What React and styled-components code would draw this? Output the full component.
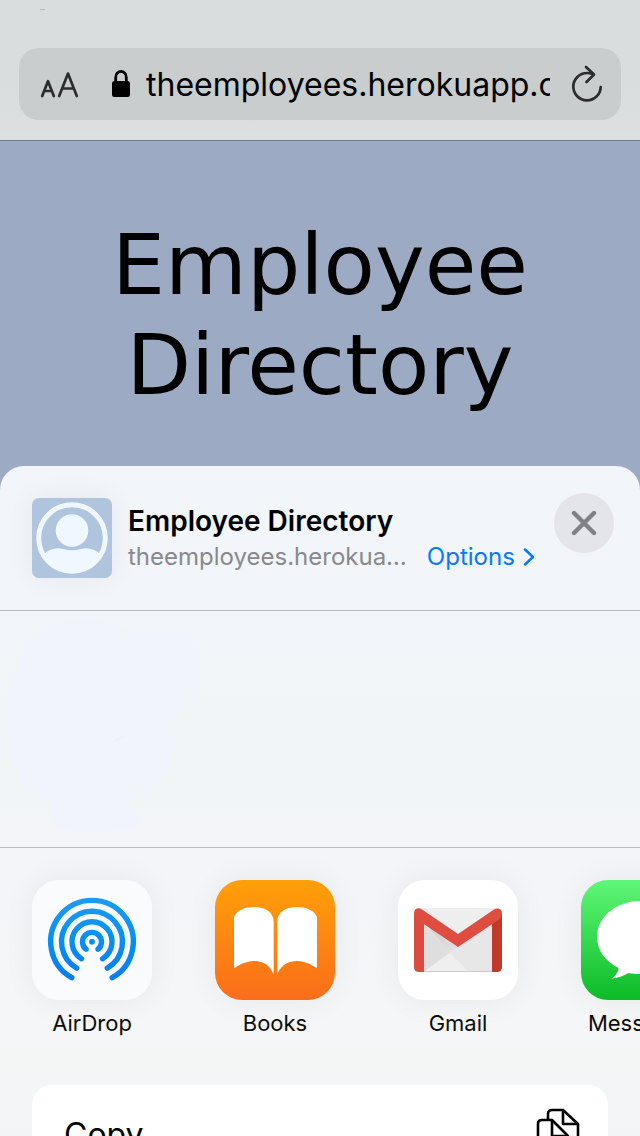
import React from 'react';
import styled, { createGlobalStyle } from 'styled-components';

const GlobalStyle = createGlobalStyle`
  * { box-sizing: border-box; }
  body {
    margin: 0;
    font-family: Inter, "Liberation Sans", sans-serif;
    color: #000;
  }
  button { font: inherit; color: inherit; border: 0; padding: 0; background: none; cursor: pointer; }
  svg { display: block; }
`;

const Screen = styled.div`
  display: flex;
  flex-direction: column;
  height: 100vh;
  overflow: hidden;
  background: #9cabc3;
`;

const BrowserChrome = styled.header`
  flex: none;
  padding: 0 19px 20px;
  border-bottom: 1px solid #727e90;
  background: linear-gradient(#dadddd, #d9dddd 60%, #dddfe0);
`;

const StatusBar = styled.div`
  display: flex;
  height: 48px;
  padding: 9px 21px;
`;

const StatusMark = styled.span`
  width: 5px;
  height: 1px;
  background: #b9bcbc;
`;

const AddressBar = styled.div`
  display: flex;
  align-items: center;
  height: 72px;
  padding: 0 18px 0 20px;
  border-radius: 20px;
  background: #c9cdce;
`;

const BarButton = styled.button`
  flex: none;
  color: #2b2d2d;
`;

const LockIcon = styled.svg`
  flex: none;
  margin-left: 33px;
`;

const UrlInput = styled.input`
  flex: 1;
  min-width: 0;
  height: 48px;
  margin: 0 21px 0 16px;
  padding: 0;
  border: 0;
  outline: 0;
  background: none;
  color: #000;
  font-family: inherit;
  font-size: 32px;
`;

const Hero = styled.main`
  flex: none;
  padding: 74px 64px 51px;
`;

const HeroTitle = styled.h1`
  margin: 0;
  font-family: "DejaVu Sans", sans-serif;
  font-size: 84px;
  font-weight: 400;
  line-height: 100px;
  text-align: center;
`;

const Sheet = styled.section`
  flex: 1;
  min-height: 0;
  overflow: hidden;
  border-radius: 24px 24px 0 0;
  background: linear-gradient(#f2f5f9, #f1f5f8 45%, #f4f5f8 60%, #f4f6f6 90%, #f3f4f6);
`;

const SheetHeader = styled.div`
  display: flex;
  height: 145px;
  padding: 32px 26px 32px 32px;
  border-bottom: 1px solid #b9bcc2;
`;

const Thumb = styled.svg`
  flex: none;
  border-radius: 7px;
  box-shadow: 0 0 28px rgba(0, 0, 0, 0.06);
`;

const PageInfo = styled.div`
  flex: 1;
  min-width: 0;
  padding: 5px 0 0 16px;
`;

const PageTitle = styled.h2`
  margin: 0;
  font-size: 28px;
  font-weight: 600;
  line-height: 36px;
  white-space: nowrap;
`;

const PageMeta = styled.div`
  display: flex;
  align-items: center;
  gap: 20px;
  font-size: 24px;
  line-height: 36px;
  white-space: nowrap;
`;

const PageUrl = styled.span`
  color: #88898d;
`;

const OptionsButton = styled.button`
  display: flex;
  align-items: center;
  gap: 8px;
  color: #007aff;
`;

const CloseButton = styled.button`
  display: grid;
  flex: none;
  place-items: center;
  width: 60px;
  height: 60px;
  margin-top: -5px;
  border-radius: 50%;
  background: #e4e5ea;
  color: #808186;
`;

const Contacts = styled.div`
  height: 237px;
  overflow: hidden;
  border-bottom: 1px solid #b9bcc2;
`;

const AppRow = styled.div`
  display: flex;
  gap: 63px;
  height: 237px;
  padding: 32px;
  overflow: hidden;
`;

const AppButton = styled.button`
  display: flex;
  flex: none;
  flex-direction: column;
  align-items: center;
  width: 120px;
  height: 160px;
  gap: 8px;
  font-size: 22px;
  line-height: 30px;
  color: #0c0c0c;
`;

const AppTile = styled.svg`
  flex: none;
  border-radius: 27px;
  background: ${(p) => p.$fill};
  box-shadow: 0 0 32px rgba(0, 0, 0, 0.06);
`;

const Actions = styled.div`
  margin: 0 32px;
  border-radius: 20px;
  background: #fff;
`;

const ActionButton = styled.button`
  display: flex;
  align-items: center;
  justify-content: space-between;
  width: 100%;
  height: 98px;
  padding: 0 28px 0 32px;
  font-size: 32px;
`;

function AirDropArt() {
  return (
    <>
      <defs>
        <linearGradient id="airdrop" gradientUnits="userSpaceOnUse" x1="0" y1="18" x2="0" y2="100">
          <stop offset="0" stopColor="#1d9bf3" />
          <stop offset="0.5" stopColor="#0590f5" />
          <stop offset="1" stopColor="#0a7bf5" />
        </linearGradient>
      </defs>
      <g fill="none" stroke="url(#airdrop)" strokeWidth="5.4" strokeLinecap="round">
        <path d="M39.8 97.7A41.3 41.3 0 1 1 80.2 97.7" />
        <path d="M44.7 88.2A30.5 30.5 0 1 1 75.3 88.2" />
        <path d="M49.4 78.7A20 20 0 1 1 70.6 78.7" />
        <path d="M54 69.2A9.5 9.5 0 1 1 66 69.2" />
      </g>
      <circle cx="60" cy="61.7" r="2.9" fill="#0590f5" />
    </>
  );
}

function BooksArt() {
  return (
    <g fill="#fff">
      <path d="M19 37C22 30 30 27 39 27C50 27 58.7 32 58.7 42V95.7C57 87 49 81 39 81C31 81 24 85 20.5 87.6Q19 88.5 19 86.5Z" />
      <path d="M102 37C99 30 91 27 82 27C71 27 62.2 32 62.2 42V95.7C64 87 72 81 82 81C90 81 97 85 100.5 87.6Q102 88.5 102 86.5Z" />
    </g>
  );
}

function GmailArt() {
  return (
    <>
      <defs>
        <linearGradient id="mailShade" x1="0" y1="0" x2="1" y2="1">
          <stop offset="0" stopColor="#c9c9c9" />
          <stop offset="1" stopColor="#e4e4e4" />
        </linearGradient>
      </defs>
      <path d="M21 28H99L98 92H22Z" fill="#eee" />
      <path d="M26 43L60 67L94 43V92H26Z" fill="#e7e7e7" />
      <path d="M26 44L52 72L26 92Z" fill="#dedede" />
      <path d="M26 42L60 67L52 73Z" fill="url(#mailShade)" />
      <path d="M27 91L52 73L70 91Z" fill="#efefef" />
      <path d="M26 91H94V92H26Z" fill="#ccc" />
      <path d="M16 33L26 43V92H21Q16 92 16 87Z" fill="#da4b40" />
      <path d="M104 33L94 43V92H99Q104 92 104 87Z" fill="#c0392b" />
      <path d="M16 33C16 28 21 27 24 29.5L60 54L96 29.5C100 27 104 29 104 33C104 36 103 38 101 39.5L60 67L19 39.5C17 38 16 36 16 33Z" fill="#df4d41" />
    </>
  );
}

function MessagesArt() {
  return (
    <path
      d="M60 21C35 21 16 37 16 57C16 70 24 81 37.5 88C37.5 92 34 96 31 98.5C38 98 43 95.5 47.5 93C51 93.7 55 94 60 94C85 94 104 77 104 57C104 37 85 21 60 21Z"
      fill="#fff"
    />
  );
}

const APPS = [
  { name: 'AirDrop', fill: '#fafbfd', Art: AirDropArt },
  { name: 'Books', fill: 'linear-gradient(#ffa008, #fb6d1b)', Art: BooksArt },
  { name: 'Gmail', fill: '#fff', Art: GmailArt },
  { name: 'Messages', fill: 'linear-gradient(#5ff777, #0cbb27)', Art: MessagesArt },
];

export default function App() {
  return (
    <>
      <GlobalStyle />
      <Screen>
        <BrowserChrome>
          <StatusBar>
            <StatusMark />
          </StatusBar>
          <AddressBar>
            <BarButton aria-label="Text size">
              <svg width="40" height="28" viewBox="0 0 40 28" fill="none" stroke="currentColor" strokeWidth="2.7" strokeLinecap="round" strokeLinejoin="round">
                <path d="M3.2 26L9 11.2L14.8 26M5.2 21H12.8" />
                <path d="M20.2 26L29 3.6L37.8 26M23.2 18.5H34.8" />
              </svg>
            </BarButton>
            <LockIcon width="18" height="28" viewBox="0 0 18 28" aria-hidden="true">
              <rect x="0" y="11" width="18" height="16" rx="2.5" />
              <path d="M3.7 12V7.5C3.7 -0.5 14.3 -0.5 14.3 7.5V12" fill="none" stroke="#000" strokeWidth="2.8" />
            </LockIcon>
            <UrlInput aria-label="Address" readOnly value="theemployees.herokuapp.com" />
            <BarButton aria-label="Reload">
              <svg width="32" height="38" viewBox="0 0 32 38" fill="none" stroke="currentColor" strokeWidth="2.7" strokeLinecap="round" strokeLinejoin="round">
                <path d="M21 8.8C19 8.2 17.5 8 16 8A13.7 13.7 0 1 0 29.7 22" />
                <path d="M15 2L23 9.5L15.5 17" />
              </svg>
            </BarButton>
          </AddressBar>
        </BrowserChrome>
        <Hero>
          <HeroTitle>Employee Directory</HeroTitle>
        </Hero>
        <Sheet aria-label="Share">
          <SheetHeader>
            <Thumb width="80" height="80" viewBox="0 0 80 80" aria-hidden="true">
              <rect width="80" height="80" fill="#b0c4de" />
              <circle cx="40" cy="40" r="33.3" fill="none" stroke="#f0f8ff" strokeWidth="5" />
              <circle cx="40" cy="32.5" r="16.3" fill="#f0f8ff" />
              <path d="M12 56C17 51 25 49 31 51Q40 53.5 49 51C55 49 63 51 68 56A33 33 0 0 1 12 56Z" fill="#f0f8ff" />
            </Thumb>
            <PageInfo>
              <PageTitle>Employee Directory</PageTitle>
              <PageMeta>
                <PageUrl>theemployees.herokua…</PageUrl>
                <OptionsButton>
                  Options
                  <svg width="12" height="18" viewBox="0 0 12 18" fill="none" stroke="currentColor" strokeWidth="2.4" strokeLinecap="round" strokeLinejoin="round">
                    <path d="M2 1.5L10 9L2 16.5" />
                  </svg>
                </OptionsButton>
              </PageMeta>
            </PageInfo>
            <CloseButton aria-label="Close">
              <svg width="26" height="26" viewBox="0 0 26 26" stroke="currentColor" strokeWidth="4.4" strokeLinecap="round">
                <path d="M3 3L23 23M23 3L3 23" />
              </svg>
            </CloseButton>
          </SheetHeader>
          <Contacts>
            <svg width="240" height="236" viewBox="0 0 240 236" aria-hidden="true">
              <path
                d="M8 100C10 40 40 8 85 8C105 8 118 13 131 20L185 22Q192 23 192 30C200 45 205 75 193 87C185 92 174 105 168 118Q180 128 177 138Q166 150 168 160C158 180 140 185 125 192C140 205 150 215 130 218C100 222 60 222 54 214C52 200 45 182 27 177C12 155 7 130 8 100Z"
                fill="#f1f5fb"
              />
              <path d="M115 130L124 125" stroke="#e6f2f3" />
            </svg>
          </Contacts>
          <AppRow>
            {APPS.map(({ name, fill, Art }) => (
              <AppButton key={name}>
                <AppTile $fill={fill} width="120" height="120" viewBox="0 0 120 120" aria-hidden="true">
                  <Art />
                </AppTile>
                {name}
              </AppButton>
            ))}
          </AppRow>
          <Actions>
            <ActionButton>
              Copy
              <svg width="44" height="52" viewBox="0 0 44 52" fill="none" stroke="#000" strokeWidth="2.6" strokeLinejoin="round" aria-hidden="true">
                <path d="M12 12V6Q12 2 16 2H27L42 16V38Q42 41 38 41H32" />
                <path d="M27 2V16H42" />
                <path d="M6 12H16L32 28V46Q32 50 28 50H6Q2 50 2 46V16Q2 12 6 12Z" />
                <path d="M16 12V28H32" />
              </svg>
            </ActionButton>
          </Actions>
        </Sheet>
      </Screen>
    </>
  );
}
